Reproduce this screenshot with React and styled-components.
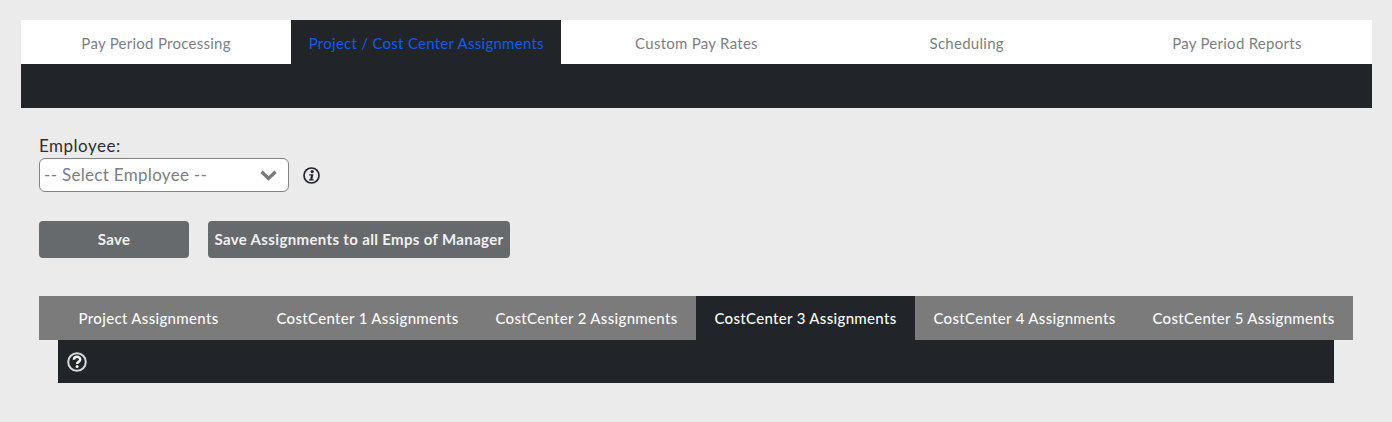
import React from 'react'
import styled, { createGlobalStyle } from 'styled-components'

const mainTabs = ['Pay Period Processing', 'Project / Cost Center Assignments', 'Custom Pay Rates', 'Scheduling', 'Pay Period Reports']
const subTabs = ['Project Assignments', 'CostCenter 1 Assignments', 'CostCenter 2 Assignments', 'CostCenter 3 Assignments', 'CostCenter 4 Assignments', 'CostCenter 5 Assignments']

function InfoIcon() {
    return (
        <svg width="17" height="17" viewBox="0 0 17 17" fill="none">
            <circle cx="8.5" cy="8.5" r="7.5" stroke="#212529" strokeWidth="1.7" />
            <circle cx="9.2" cy="4.6" r="1.6" fill="#212529" />
            <path d="M6.2 7.2h4.2l-1 5h1.2v1.4H6.2v-1.4h1l.8-3.6H6.2z" fill="#212529" />
        </svg>
    )
}

function HelpIcon() {
    return (
        <svg width="20" height="20" viewBox="0 0 20 20" fill="none">
            <circle cx="10" cy="10" r="8.8" stroke="#d9dada" strokeWidth="2" />
            <path d="M6.9 7.7c0-4 6.3-3.9 6.3-.2 0 2.4-3.1 2.3-3.1 4.4" stroke="#f2f2f2" strokeWidth="2.5" />
            <circle cx="10.1" cy="14.6" r="1.5" fill="#f2f2f2" />
        </svg>
    )
}

function Chevron() {
    return (
        <svg width="17" height="11" viewBox="0 0 17 11" fill="none">
            <path d="M1.5 1.8l7 6.6 7-6.6" stroke="#77797b" strokeWidth="3.4" />
        </svg>
    )
}

export default function App() {
    return (
        <Page>
            <GlobalStyle />
            <MainTabs>
                {mainTabs.map((t, i) => (
                    <MainTab key={t} $active={i === 1}>{t}</MainTab>
                ))}
            </MainTabs>
            <MainBar />
            <Content>
                <Label>Employee:</Label>
                <SelectRow>
                    <Select>
                        <SelectText>-- Select Employee --</SelectText>
                        <Chevron />
                    </Select>
                    <InfoIcon />
                </SelectRow>
                <Buttons>
                    <Button $wide={false}>Save</Button>
                    <Button $wide>Save Assignments to all Emps of Manager</Button>
                </Buttons>
                <SubTabs>
                    {subTabs.map((t, i) => (
                        <SubTab key={t} $active={i === 3}>{t}</SubTab>
                    ))}
                </SubTabs>
                <SubPanel>
                    <HelpIcon />
                </SubPanel>
            </Content>
        </Page>
    )
}

const GlobalStyle = createGlobalStyle`
  html, body {
    margin: 0;
    background: #ebebeb;
  }
  * {
    box-sizing: border-box;
  }
`

const Page = styled.div`
  width: 1392px;
  height: 422px;
  padding: 20px 20px 0 21px;
  overflow: hidden;
  font-family: "Lato", "Open Sans", sans-serif;
  font-size: 15px;
  color: #212529;
`

const MainTabs = styled.div`
  display: grid;
  grid-template-columns: repeat(5, 1fr);
  background: #fff;
`

const MainTab = styled.div`
  height: 44px;
  padding-top: 2px;
  display: flex;
  align-items: center;
  justify-content: center;
  letter-spacing: 0.27px;
  white-space: nowrap;
  background: ${(p) => (p.$active ? '#212529' : '#fff')};
  color: ${(p) => (p.$active ? '#0d5cf0' : '#7b7f83')};
`

const MainBar = styled.div`
  height: 44px;
  background: #212529;
`

const Content = styled.div`
  padding: 27px 19px 0 18px;
`

const Label = styled.div`
  font-size: 17px;
  line-height: 22px;
  letter-spacing: 0.5px;
  color: #2b2f33;
`

const SelectRow = styled.div`
  display: flex;
  align-items: center;
  gap: 14px;
  margin-top: 1px;
`

const Select = styled.div`
  width: 250px;
  height: 34px;
  display: flex;
  align-items: center;
  justify-content: space-between;
  padding: 0 11px 0 4px;
  background: #fff;
  border: 1px solid #808488;
  border-radius: 6px;
  font-size: 17px;
  letter-spacing: 0.31px;
  color: #797e83;
`

const SelectText = styled.span`
  padding-bottom: 2px;
`

const Buttons = styled.div`
  display: flex;
  gap: 19px;
  margin-top: 29px;
`

const Button = styled.div`
  width: ${(p) => (p.$wide ? '302px' : '150px')};
  height: 37px;
  padding-bottom: 2px;
  display: flex;
  align-items: center;
  justify-content: center;
  background: #676a6d;
  border-radius: 4px;
  color: #f1f1f1;
  font-weight: 700;
  white-space: nowrap;
  letter-spacing: 0.35px;
`

const SubTabs = styled.div`
  display: grid;
  grid-template-columns: repeat(6, 219px);
  margin-top: 38px;
`

const SubTab = styled.div`
  height: 44px;
  display: flex;
  align-items: center;
  justify-content: center;
  white-space: nowrap;
  font-weight: 500;
  letter-spacing: 0.32px;
  color: #fafafa;
  background: ${(p) => (p.$active ? '#212529' : '#7b7b7b')};
`

const SubPanel = styled.div`
  margin: 0 19px;
  height: 43px;
  display: flex;
  align-items: center;
  padding-left: 9px;
  background: #212529;
`
